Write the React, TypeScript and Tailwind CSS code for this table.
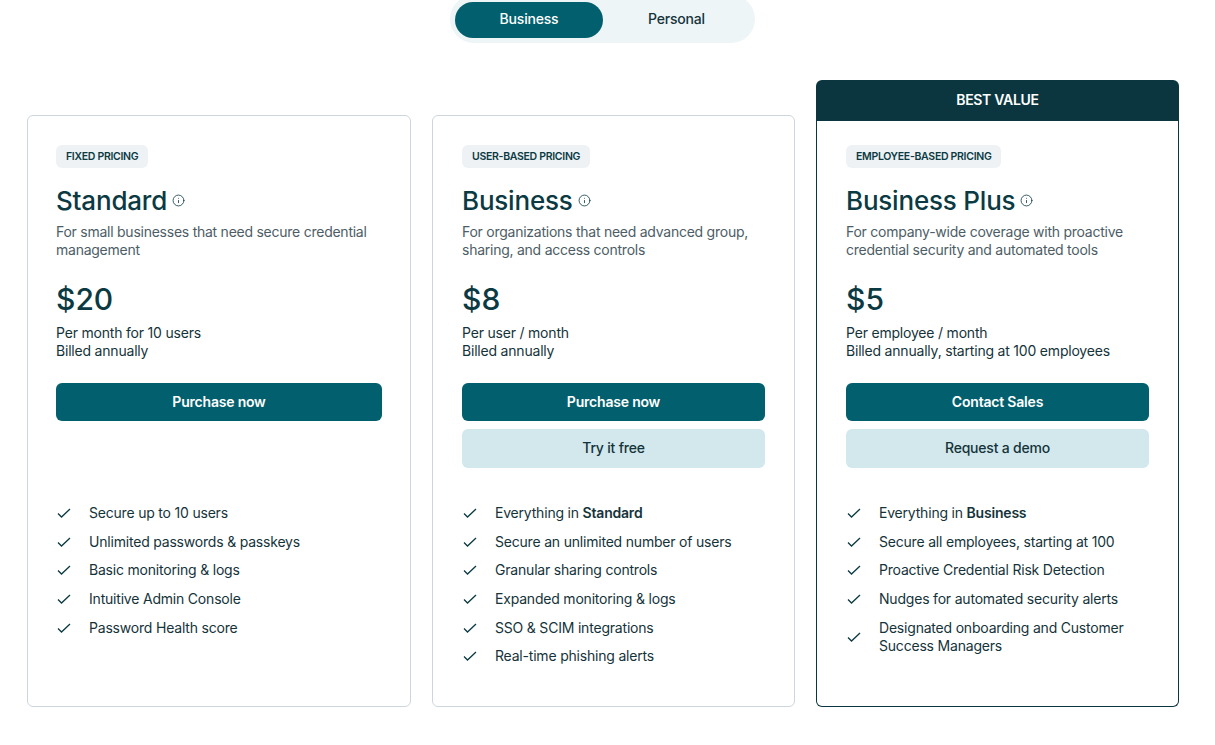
import { Info } from "lucide-react";
import type { ReactNode } from "react";

type Plan = {
  badge: string;
  name: string;
  description: string;
  price: string;
  terms: string[];
  primary: string;
  secondary?: string;
  features: ReactNode[];
};

const plans: Plan[] = [
  {
    badge: "Fixed pricing",
    name: "Standard",
    description: "For small businesses that need secure credential management",
    price: "$20",
    terms: ["Per month for 10 users", "Billed annually"],
    primary: "Purchase now",
    features: [
      "Secure up to 10 users",
      "Unlimited passwords & passkeys",
      "Basic monitoring & logs",
      "Intuitive Admin Console",
      "Password Health score",
    ],
  },
  {
    badge: "User-based pricing",
    name: "Business",
    description: "For organizations that need advanced group, sharing, and access controls",
    price: "$8",
    terms: ["Per user / month", "Billed annually"],
    primary: "Purchase now",
    secondary: "Try it free",
    features: [
      <>
        Everything in <b className="font-semibold">Standard</b>
      </>,
      "Secure an unlimited number of users",
      "Granular sharing controls",
      "Expanded monitoring & logs",
      "SSO & SCIM integrations",
      "Real-time phishing alerts",
    ],
  },
  {
    badge: "Employee-based pricing",
    name: "Business Plus",
    description: "For company-wide coverage with proactive credential security and automated tools",
    price: "$5",
    terms: ["Per employee / month", "Billed annually, starting at 100 employees"],
    primary: "Contact Sales",
    secondary: "Request a demo",
    features: [
      <>
        Everything in <b className="font-semibold">Business</b>
      </>,
      "Secure all employees, starting at 100",
      "Proactive Credential Risk Detection",
      "Nudges for automated security alerts",
      "Designated onboarding and Customer Success Managers",
    ],
  },
];

function Check() {
  return (
    <svg width="16" height="12" viewBox="0 0 16 12" fill="none" className="shrink-0">
      <path d="M2 6.5 L5.5 10 L14 2" stroke="#0b3a43" strokeWidth="1.3" />
    </svg>
  );
}

function PlanBody({ plan }: { plan: Plan }) {
  return (
    <>
      <span className="self-start rounded-md bg-[#eef2f5] px-[10px] text-[10.5px] font-semibold uppercase leading-[23px] tracking-[-0.3px] text-[#0b3a43]">
        {plan.badge}
      </span>
      <div className="mt-[17px] flex items-center gap-[5px]">
        <h2 className="text-[26px] font-medium leading-[32px] tracking-[-0.2px] text-[#0b3a43]">{plan.name}</h2>
        <Info size={13} strokeWidth={1.5} className="mt-[-2px] text-[#0b3a43]" />
      </div>
      <p className="mt-[6px] text-[14px] leading-[18px] tracking-[-0.25px] text-[#4d5d66]">{plan.description}</p>
      <div className="mt-[22px] text-[30px] font-medium leading-[36px] text-[#0b3a43]">{plan.price}</div>
      <div className="mt-[7px] text-[14px] leading-[18px] tracking-[-0.2px] text-[#15333a]">
        {plan.terms.map((t) => (
          <div key={t}>{t}</div>
        ))}
      </div>
      <div className="mt-[23px] flex flex-col gap-2">
        <button className="h-[38px] rounded-md bg-[#02606e] pb-[2px] text-[14px] font-semibold tracking-[-0.2px] text-white">
          {plan.primary}
        </button>
        {plan.secondary ? (
          <button className="h-[39px] rounded-md bg-[#d2e8ec] pb-[2px] text-[14px] font-medium tracking-[-0.2px] text-[#15333a]">
            {plan.secondary}
          </button>
        ) : (
          <div className="h-[39px]" />
        )}
      </div>
      <ul className="mt-[36px] flex flex-col gap-[10.7px] pb-6">
        {plan.features.map((f, i) => (
          <li key={i} className="flex items-center gap-[17px] text-[14px] leading-[18px] tracking-[-0.2px] text-[#15333a]">
            <Check />
            <span>{f}</span>
          </li>
        ))}
      </ul>
    </>
  );
}

export default function App() {
  return (
    <div className="min-h-screen bg-white font-['Inter',sans-serif]">
      {/* Segment toggle */}
      <div className="-mt-[5px] ml-[450px] flex h-[48px] w-[305px] items-center rounded-full bg-[#eef5f7] px-[5px] pt-[2px]">
        <button className="h-[36px] w-[148px] rounded-full bg-[#02606e] pb-[3px] text-[14px] font-medium tracking-[-0.2px] text-white">
          Business
        </button>
        <button className="h-[36px] flex-1 pb-[3px] text-[14px] font-medium tracking-[-0.2px] text-[#15333a]">Personal</button>
      </div>

      {/* Plans */}
      <div className="mt-[37px] ml-[27px] flex h-[627px] gap-[21px]">
        <div className="mt-[35px] flex w-[384px] flex-col rounded-md border border-[#cdd6dd] px-[28px] pt-[29px]">
          <PlanBody plan={plans[0]} />
        </div>
        <div className="mt-[35px] flex w-[363px] flex-col rounded-md border border-[#cdd6dd] px-[29px] pt-[29px]">
          <PlanBody plan={plans[1]} />
        </div>
        <div className="flex w-[363px] flex-col">
          <div className="flex h-[41px] items-center justify-center rounded-t-md bg-[#0b3640] pb-[2px] text-[14px] font-semibold tracking-[-0.3px] text-white">
            BEST VALUE
          </div>
          <div className="flex flex-1 flex-col rounded-b-md border border-t-0 border-[#0b3640] px-[29px] pt-[24px]">
            <PlanBody plan={plans[2]} />
          </div>
        </div>
      </div>
    </div>
  );
}
